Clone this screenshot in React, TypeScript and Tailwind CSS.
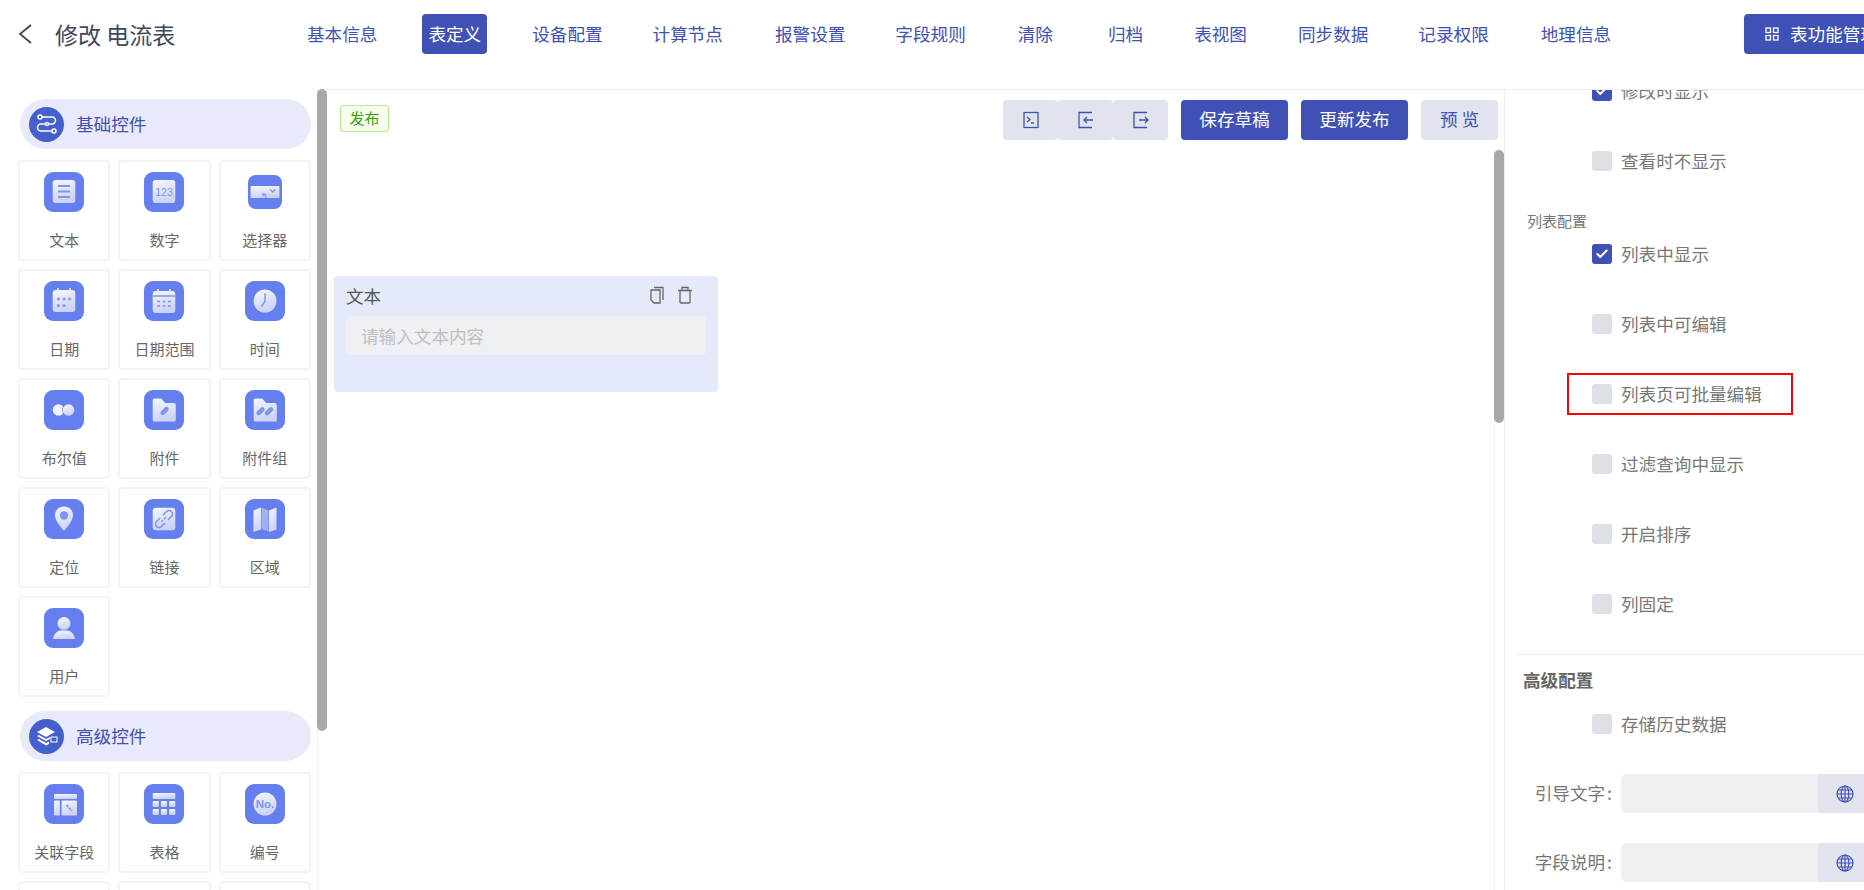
import React from "react";
import { Check } from "lucide-react";

const shape = "url(#tileShape)";
const accent = "#7f95ef";

const navItems = [
  { label: "基本信息", cls: "" },
  { label: "表定义", cls: "ml-[39px] bg-[#4051b5] text-white" },
  { label: "设备配置", cls: "ml-[39px]" },
  { label: "计算节点", cls: "ml-[38px]" },
  { label: "报警设置", cls: "ml-[40px]" },
  { label: "字段规则", cls: "ml-[38px]" },
  { label: "清除", cls: "ml-[40px]" },
  { label: "归档", cls: "ml-[43px]" },
  { label: "表视图", cls: "ml-[39px]" },
  { label: "同步数据", cls: "ml-[39px]" },
  { label: "记录权限", cls: "ml-[38px]" },
  { label: "地理信息", cls: "ml-[40px]" },
];

function Tile({ children, small }: { children: React.ReactNode; small?: boolean }) {
  return (
    <svg
      viewBox="0 0 40 40"
      className={small ? "h-[34px] w-[34px]" : "h-[40px] w-[40px]"}
    >
      <rect width="40" height="40" rx="9" fill="#6580ee" />
      {children}
    </svg>
  );
}

const basicControls: { label: string; small?: boolean; icon: React.ReactNode }[] = [
  {
    label: "文本",
    icon: (
      <>
        <rect x="8.7" y="8" width="22.6" height="23" rx="3" fill={shape} />
        <path d="M14 14h12M14 19.500h12M14 25h12" stroke={accent} strokeWidth="2.200" />
      </>
    ),
  },
  {
    label: "数字",
    icon: (
      <>
        <rect x="8.700" y="8" width="22.600" height="23" rx="3" fill={shape} />
        <text x="20" y="24" textAnchor="middle" fontSize="10.500" fill={accent} fontFamily="Liberation Sans, sans-serif">
          123
        </text>
      </>
    ),
  },
  {
    label: "选择器",
    small: true,
    icon: (
      <>
        <rect x="3" y="13" width="34" height="14" rx="1" fill={shape} />
        <path d="M26 17l3 3 3-3" stroke={accent} strokeWidth="1.600" fill="none" />
        <path d="M17 21l6 2-2.500 1 2 3h-2l-1.500-2.500-2 1.500z" fill="#8da0f0" />
      </>
    ),
  },
  {
    label: "日期",
    icon: (
      <>
        <rect x="8.700" y="9" width="22.600" height="22" rx="3" fill={shape} />
        <path d="M14 7v5M26 7v5" stroke="#e8eafa" strokeWidth="1.600" />
        <circle cx="14.500" cy="18" r="1.500" fill={accent} />
        <circle cx="20" cy="18" r="1.500" fill={accent} />
        <circle cx="25.500" cy="18" r="1.500" fill={accent} />
        <circle cx="14.500" cy="24.500" r="1.500" fill={accent} />
        <circle cx="20" cy="24.500" r="1.500" fill={accent} />
      </>
    ),
  },
  {
    label: "日期范围",
    icon: (
      <>
        <rect x="8.700" y="10" width="22.600" height="22" rx="3" fill={shape} />
        <path d="M14 8v5M26 8v5" stroke="#e8eafa" strokeWidth="1.600" />
        <path d="M8.700 15h22.600" stroke={accent} strokeWidth="1.500" />
        <path d="M13 20.500h3M18.500 20.500h3M24 20.500h3M13 25h3M18.500 25h3M24 25h3" stroke={accent} strokeWidth="1.300" />
      </>
    ),
  },
  {
    label: "时间",
    icon: (
      <>
        <circle cx="20" cy="20" r="11.500" fill={shape} />
        <path d="M20 12.500v8l-3.500 5" stroke={accent} strokeWidth="1.500" fill="none" />
      </>
    ),
  },
  {
    label: "布尔值",
    icon: (
      <>
        <circle cx="14.500" cy="20" r="5.800" fill="#f1f3fd" />
        <circle cx="24.500" cy="20" r="6.300" fill="#6580ee" />
        <circle cx="24.500" cy="20" r="5.800" fill={shape} />
      </>
    ),
  },
  {
    label: "附件",
    icon: (
      <>
        <path d="M8.700 10a1.500 1.500 0 0 1 1.500-1.500h7l4 4.500h8.600a2 2 0 0 1 2 2v15a1.500 1.500 0 0 1-1.500 1.500H10.200a1.500 1.500 0 0 1-1.500-1.500z" fill={shape} />
        <rect x="15.500" y="18.800" width="10" height="4.500" rx="2.250" transform="rotate(-45 20.500 21)" fill={accent} />
      </>
    ),
  },
  {
    label: "附件组",
    icon: (
      <>
        <path d="M8.700 10a1.500 1.500 0 0 1 1.500-1.500h7l4 4.500h8.600a2 2 0 0 1 2 2v15a1.500 1.500 0 0 1-1.500 1.500H10.200a1.500 1.500 0 0 1-1.500-1.500z" fill={shape} />
        <rect x="10.500" y="19" width="10" height="4.500" rx="2.250" transform="rotate(-45 15.500 21.250)" fill={accent} />
        <rect x="19" y="19" width="10" height="4.500" rx="2.250" transform="rotate(-45 24 21.250)" fill={accent} />
      </>
    ),
  },
  {
    label: "定位",
    icon: (
      <>
        <path d="M20 7.500c-5.500 0-9 4-9 8.800 0 5.500 5.500 11.500 9 15.700 3.500-4.200 9-10.200 9-15.700 0-4.800-3.500-8.800-9-8.800z" fill={shape} />
        <circle cx="20" cy="16.500" r="4.200" fill={accent} />
      </>
    ),
  },
  {
    label: "链接",
    icon: (
      <>
        <rect x="8.700" y="8.700" width="22.600" height="22.600" rx="3" fill={shape} />
        <g fill="none" stroke={accent} strokeWidth="1.500" transform="rotate(-45 20 20)">
          <path d="M18 16.500h-5a3.500 3.500 0 0 0 0 7h5" />
          <path d="M22 16.500h5a3.500 3.500 0 0 1 0 7h-5" />
          <path d="M16 20h8" strokeDasharray="2.500 1.500" />
        </g>
      </>
    ),
  },
  {
    label: "区域",
    icon: (
      <>
        <path d="M8.500 11.500l7.500-3v22l-7.500 2.500z" fill={shape} />
        <path d="M16.500 8.500l7 3v21l-7-2.500z" fill="#9fb0f3" />
        <path d="M24 11.500l7.500-3v22l-7.500 2.500z" fill={shape} />
      </>
    ),
  },
  {
    label: "用户",
    icon: (
      <>
        <circle cx="20" cy="15.500" r="6.500" fill={shape} />
        <path d="M9 31c.5-5 4-8 8-8.500h6c4 .5 7.500 3.500 8 8.500z" fill={shape} />
      </>
    ),
  },
];

const advancedControls: { label: string; icon?: React.ReactNode }[] = [
  {
    label: "关联字段",
    icon: (
      <>
        <rect x="10" y="10" width="23" height="5" rx="1" fill={shape} />
        <rect x="10" y="16.500" width="6" height="15" rx="1" fill={shape} />
        <rect x="17.500" y="16.500" width="15.500" height="15" rx="1" fill={shape} />
        <path d="M22.500 21l5.500 6" stroke={accent} strokeWidth="2" strokeDasharray="2.500 1" />
      </>
    ),
  },
  {
    label: "表格",
    icon: (
      <>
        <rect x="8.700" y="9" width="22.600" height="6" rx="1" fill={shape} />
        {[17, 25].map((y) =>
          [8.7, 16.9, 25.1].map((x) => (
            <rect key={`${x}-${y}`} x={x} y={y} width="6.200" height="6" rx="0.800" fill={shape} />
          ))
        )}
      </>
    ),
  },
  {
    label: "编号",
    icon: (
      <>
        <circle cx="20" cy="20" r="11.500" fill={shape} />
        <text x="20" y="24" textAnchor="middle" fontSize="11.500" fontWeight="700" fill={accent} fontFamily="Liberation Sans, sans-serif">
          No.
        </text>
      </>
    ),
  },
  { label: "" },
  { label: " " },
  { label: "  " },
];

function ControlCard({ label, icon, small }: { label: string; icon?: React.ReactNode; small?: boolean }) {
  return (
    <div className="flex h-[101px] flex-col items-center rounded-[4px] border-2 border-[#f3f3f5] bg-white pt-[10px]">
      <div className="flex h-[40px] items-center justify-center">
        {icon && <Tile small={small}>{icon}</Tile>}
      </div>
      <span className="mt-[15px] text-[15px] leading-[26px] whitespace-nowrap text-[#666]">{label}</span>
    </div>
  );
}

function GroupHeader({ label, icon }: { label: string; icon: React.ReactNode }) {
  return (
    <div className="ml-[2px] flex h-[50px] items-center rounded-full bg-[#e8e9fa] pl-[9px]">
      <span className="flex h-[35px] w-[35px] items-center justify-center rounded-full bg-[#4460cc]">{icon}</span>
      <span className="ml-[12px] text-[17.6px] text-[#4051b5]">{label}</span>
    </div>
  );
}

function Rail({ thumb }: { thumb: string }) {
  return (
    <div className="w-[10px] shrink-0 shadow-[inset_1px_0_0_#f3f3f3]">
      <div className={`${thumb} w-full rounded-[5px] bg-[#a8a8a8]`} />
    </div>
  );
}

function CheckRow({ label, checked, boxed, cls }: { label: string; checked?: boolean; boxed?: boolean; cls?: string }) {
  return (
    <div className={`relative ml-[87px] flex h-[20px] items-center ${cls ?? ""}`}>
      <span
        className={`flex h-[20px] w-[20px] items-center justify-center rounded-[3px] ${
          checked ? "bg-[#4051b5]" : "bg-[#dde1e6]"
        }`}
      >
        {checked && <Check size={14} strokeWidth={3.5} className="text-white" />}
      </span>
      <span className="ml-[9px] text-[17.6px] whitespace-nowrap text-[#777]">{label}</span>
      {boxed && <div className="absolute top-[-11px] left-[-25px] h-[42px] w-[226px] border-2 border-[#f00]" />}
    </div>
  );
}

function LangInput({ label, cls }: { label: string; cls?: string }) {
  return (
    <div className={`flex h-[39px] items-center ${cls ?? ""}`}>
      <span className="w-[107px] shrink-0 text-right text-[17.6px] whitespace-nowrap text-[#777]">
        {label}
        <span className="ml-[2px]">:</span>
      </span>
      <div className="ml-[9px] h-full w-[197px] shrink-0 rounded-l-[6px] bg-[#eff0f3]" />
      <div className="flex h-full w-[60px] shrink-0 items-center bg-[#e1e4ec] pl-[18px]">
        <svg viewBox="0 0 18 18" className="h-[18px] w-[18px]" fill="none" stroke="#4051b5" strokeWidth="1.200">
          <circle cx="9" cy="9" r="8" />
          <ellipse cx="9" cy="9" rx="3.800" ry="8" />
          <path d="M9 1v16M1 9h16M2 5h14M2 13h14" />
        </svg>
      </div>
    </div>
  );
}

const ToolIcon = ({ children }: { children: React.ReactNode }) => (
  <svg viewBox="0 0 18 18" className="h-[18px] w-[18px]" fill="none" stroke="#4051b5" strokeWidth="1.300">
    {children}
  </svg>
);

export default function App() {
  return (
    <div className="flex h-[890px] w-[1864px] flex-col overflow-hidden bg-white [font-family:'Noto_Sans_CJK_SC',sans-serif]">
      {/* Header */}
      <header className="flex h-[89px] shrink-0 items-start pt-[14px]">
        <div className="flex h-[40px] w-[301px] shrink-0 items-center pl-[18px]">
          <svg viewBox="0 0 14 20" className="h-[20px] w-[14px]" fill="none" stroke="#3e4660" strokeWidth="1.800">
            <path d="M13 1L2 10l11 9" />
          </svg>
          <span className="ml-[23px] text-[23px] whitespace-nowrap text-[#3e4660]">修改 电流表</span>
        </div>
        <nav className="flex">
          {navItems.map((item) => (
            <a
              key={item.label}
              className={`flex h-[40px] items-center rounded-[4px] px-[6px] text-[17.6px] whitespace-nowrap ${
                item.cls.includes("bg-") ? "" : "text-[#4051b5]"
              } ${item.cls}`}
            >
              {item.label}
            </a>
          ))}
        </nav>
        <button className="absolute left-[1744px] flex h-[40px] w-[140px] items-center rounded-[4px] bg-[#4051b5] pl-[20px] text-[17.6px] whitespace-nowrap text-white">
          <svg viewBox="0 0 16 16" className="h-[16px] w-[16px]" fill="none" stroke="#fff" strokeWidth="1.300">
            <rect x="2" y="2" width="4.500" height="4.500" />
            <rect x="9.500" y="2" width="4.500" height="4.500" />
            <rect x="2" y="9.500" width="4.500" height="4.500" />
            <rect x="9.500" y="9.500" width="4.500" height="4.500" />
          </svg>
          <span className="ml-[10px]">表功能管理</span>
        </button>
      </header>

      <div className="flex min-h-0 flex-1">
        {/* Control palette */}
        <aside className="w-[317px] shrink-0 overflow-hidden pt-[10px] pr-[6px] pl-[18px]">
          <GroupHeader
            label="基础控件"
            icon={
              <svg viewBox="0 0 24 24" className="h-[24px] w-[24px]" fill="none" stroke="#fff" strokeWidth="1.500">
                <circle cx="5" cy="5" r="2" />
                <circle cx="19" cy="19" r="2" />
                <circle cx="12" cy="12" r="1.500" />
                <path d="M7 5h10a3.500 3.500 0 0 1 0 7h-3.500M10.500 12H6a3.500 3.500 0 0 0 0 7h11" />
              </svg>
            }
          />
          <div className="mt-[11px] grid grid-cols-3 gap-x-[8px] gap-y-[8px]">
            {basicControls.map((c) => (
              <ControlCard key={c.label} label={c.label} icon={c.icon} small={c.small} />
            ))}
          </div>
          <div className="mt-[14px]">
            <GroupHeader
              label="高级控件"
              icon={
                <svg viewBox="0 0 24 24" className="h-[24px] w-[24px]" fill="#fff">
                  <path d="M11 3l9 5-9 5-9-5z" />
                  <path d="M2 12l2-1 7 4 4-2v2l-4 2zM2 16l2-1 7 4 3-1.500V20l-3 1.500z" />
                  <rect x="16" y="13" width="6" height="5" fill="none" stroke="#fff" strokeWidth="1" />
                </svg>
              }
            />
          </div>
          <div className="mt-[11px] grid grid-cols-3 gap-x-[8px] gap-y-[8px]">
            {advancedControls.map((c) => (
              <ControlCard key={c.label} label={c.label.trim()} icon={c.icon} />
            ))}
          </div>
        </aside>
        <Rail thumb="h-[642px]" />

        {/* Canvas */}
        <main className="flex w-[1177px] shrink-0 flex-col border-t border-[#e8e8e8]">
          <div className="flex h-[60px] shrink-0 items-start pt-[10px] pr-[6px] pl-[13px]">
            <span className="mt-[5px] flex h-[27px] w-[49px] items-center justify-center rounded-[3px] border border-[#b7eb8f] bg-[#f6ffed] text-[15px] text-[#389e0d]">
              发布
            </span>
            <div className="ml-auto flex">
              <button className="flex h-[40px] w-[55px] items-center justify-center rounded-[4px] bg-[#e1e4ec]">
                <ToolIcon>
                  <rect x="2" y="1.500" width="14" height="15" />
                  <path d="M5 6l3 2.500L5 11M9 12h3" />
                </ToolIcon>
              </button>
              <button className="flex h-[40px] w-[55px] items-center justify-center rounded-[4px] bg-[#e1e4ec]">
                <ToolIcon>
                  <path d="M15 1.500H2v15h13" />
                  <path d="M16 9H7M10 6L7 9l3 3" />
                </ToolIcon>
              </button>
              <button className="flex h-[40px] w-[55px] items-center justify-center rounded-[4px] bg-[#e1e4ec]">
                <ToolIcon>
                  <path d="M15 1.500H2v15h13" />
                  <path d="M7 9h9M13 6l3 3-3 3" />
                </ToolIcon>
              </button>
              <button className="ml-[13px] h-[40px] w-[107px] rounded-[4px] bg-[#4051b5] pb-[2px] text-[17.6px] text-white">保存草稿</button>
              <button className="ml-[13px] h-[40px] w-[107px] rounded-[4px] bg-[#4051b5] pb-[2px] text-[17.6px] text-white">更新发布</button>
              <button className="ml-[13px] h-[40px] w-[77px] rounded-[4px] bg-[#e1e4ec] pb-[2px] text-[17.6px] text-[#4051b5]">预 览</button>
            </div>
          </div>
          <div className="flex min-h-0 flex-1">
            <div className="min-w-0 flex-1 pt-[126px] pl-[7px]">
              <div className="h-[116px] w-[384px] rounded-[4px] bg-[#e5eafa] px-[12px] pt-[7px]">
                <div className="flex h-[26px] items-start justify-between">
                  <span className="text-[17.6px] leading-[26px] text-[#555]">文本</span>
                  <div className="mr-[13px] flex gap-[12px] pt-[3px]">
                    <svg viewBox="0 0 16 18" className="h-[18px] w-[16px]" fill="none" stroke="#666" strokeWidth="1.300">
                      <path d="M5 1.500h9v12.500M2 4h9v13H5l-3-3z" />
                    </svg>
                    <svg viewBox="0 0 16 18" className="h-[18px] w-[16px]" fill="none" stroke="#666" strokeWidth="1.300">
                      <path d="M1 4.500h14M5 4.500V1.500h6v3M3 4.500V16a1 1 0 0 0 1 1h8a1 1 0 0 0 1-1V4.500" />
                    </svg>
                  </div>
                </div>
                <div className="mt-[7px] flex h-[39px] w-[360px] items-center rounded-[4px] bg-[#eff0f3] pt-[2px] pl-[15px] text-[17.6px] text-[#bfbfbf]">
                  请输入文本内容
                </div>
              </div>
            </div>
            <Rail thumb="h-[273px]" />
          </div>
        </main>

        {/* Field properties */}
        <section className="flex-1 overflow-hidden border-t border-l border-[#eeeeee]">
          <CheckRow label="修改时显示" checked cls="mt-[-9px]" />
          <CheckRow label="查看时不显示" cls="mt-[50px]" />
          <div className="mt-[40px] ml-[22px] h-[20px] text-[15px] leading-[20px] text-[#777]">列表配置</div>
          <CheckRow label="列表中显示" checked cls="mt-[13px]" />
          <CheckRow label="列表中可编辑" cls="mt-[50px]" />
          <CheckRow label="列表页可批量编辑" boxed cls="mt-[50px]" />
          <CheckRow label="过滤查询中显示" cls="mt-[50px]" />
          <CheckRow label="开启排序" cls="mt-[50px]" />
          <CheckRow label="列固定" cls="mt-[50px]" />
          <div className="mt-[40px] ml-[10px] h-[1px] bg-[#eeeeee]" />
          <div className="mt-[12px] ml-[18px] h-[26px] text-[17.6px] leading-[26px] font-bold text-[#666]">高级配置</div>
          <CheckRow label="存储历史数据" cls="mt-[21px]" />
          <LangInput label="引导文字" cls="mt-[40px]" />
          <LangInput label="字段说明" cls="mt-[30px]" />
        </section>
      </div>

      {/* Shared gradient for the control tiles */}
      <svg className="block h-0 w-0">
        <defs>
          <linearGradient id="tileShape" x1="0" y1="0" x2="0.300" y2="1">
            <stop offset="0" stopColor="#f6f7fe" />
            <stop offset="1" stopColor="#ccd3f3" />
          </linearGradient>
        </defs>
      </svg>
    </div>
  );
}
